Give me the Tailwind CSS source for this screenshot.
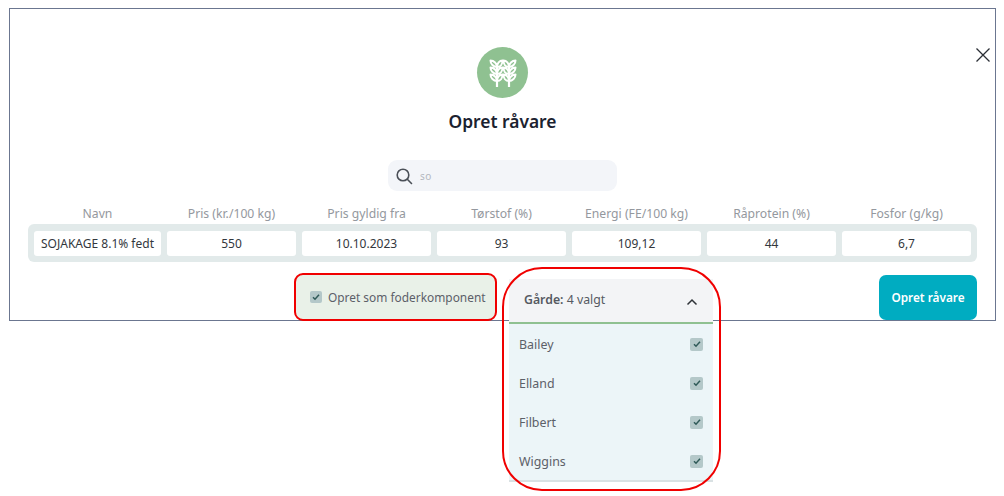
<!doctype html>
<html lang="da">
<head>
<meta charset="utf-8">
<script src="https://cdn.jsdelivr.net/npm/@tailwindcss/browser@4"></script>
</head>
<body class="bg-white font-['Noto_Sans',sans-serif]">
<div class="relative w-[1004px] h-[496px] overflow-hidden pt-[8px] pl-[9px]">
  <section class="relative w-[987px] h-[313px] border border-[#6b7690] bg-white flex flex-col items-center pt-[38px]">
    <button class="absolute right-[4px] top-[38px] text-[#2a2e35]" aria-label="Luk">
      <svg width="16" height="16" viewBox="0 0 16 16" fill="none" stroke="currentColor" stroke-width="1.3"><path d="M1.5 1.5 14.500 14.500M14.500 1.500 1.500 14.500"/></svg>
    </button>
    <div class="w-[51px] h-[51px] rounded-full bg-[#8fc191] flex items-center justify-center">
      <svg width="28" height="28" viewBox="0 0 28 28" fill="none" stroke="#fff" stroke-width="2" stroke-linecap="round" stroke-linejoin="round">
        <path stroke-width="2.200" d="M8 5v23M20 5v23"/>
        <path d="M8 8C4.500 8 1.500 5 1.500 1.500 5 1.500 8 4.500 8 8ZM8 8c3.500 0 5.500-3 5.500-6.500C10.500 1.500 8 4.500 8 8ZM8 15C4.500 15 1.500 12 1.500 8.500 5 8.500 8 11.500 8 15ZM8 15c3.500 0 5.500-3 5.500-6.500-3 0-5.500 3-5.500 6.500ZM8 22C4.500 22 1.500 19 1.500 15.500 5 15.500 8 18.500 8 22ZM8 22c3.500 0 5.500-3 5.500-6.500-3 0-5.500 3-5.500 6.500Z"/>
        <path d="M20 8c-3.500 0-5.500-3-5.500-6.500C17.500 1.500 20 4.500 20 8ZM20 8c3.500 0 6.500-3 6.500-6.500C23 1.500 20 4.500 20 8ZM20 15c-3.500 0-5.500-3-5.500-6.500 3 0 5.500 3 5.500 6.500ZM20 15c3.500 0 6.500-3 6.500-6.500-3.500 0-6.500 3-6.500 6.500ZM20 22c-3.500 0-5.500-3-5.500-6.500 3 0 5.500 3 5.500 6.500ZM20 22c3.500 0 6.500-3 6.500-6.500-3.500 0-6.500 3-6.500 6.500Z"/>
      </svg>
    </div>
    <h1 class="mt-[10px] text-[17.4px] leading-[26px] font-semibold text-[#1b2230]">Opret råvare</h1>
    <div class="mt-[26px] w-[229px] h-[31px] rounded-[9px] bg-[#f3f5f9] flex items-center pl-[7px] gap-[7px]">
      <svg width="18" height="18" viewBox="0 0 18 18" fill="none" stroke="#4a4f57" stroke-width="1.6" stroke-linecap="round"><circle cx="8" cy="8" r="5.800"/><path d="m12.300 12.300 4.200 4.200"/></svg>
      <span class="pt-[2px] text-[10px] text-[#b4b8bf] tracking-[0.5px]">so</span>
    </div>
    <div class="mt-[13px] w-[949px] grid grid-cols-[127px_repeat(6,1fr)] gap-x-[6px] px-[6px] text-center text-[12.2px] leading-[20px] text-[#94989e]">
      <span>Navn</span><span>Pris (kr./100 kg)</span><span>Pris gyldig fra</span><span>Tørstof (%)</span><span>Energi (FE/100 kg)</span><span>Råprotein (%)</span><span>Fosfor (g/kg)</span>
    </div>
    <div class="w-[949px] h-[38px] rounded-[6px] bg-[#e2eaea] grid grid-cols-[127px_repeat(6,1fr)] gap-x-[6px] px-[6px] pt-[7px] pb-[6px] text-center text-[12px] leading-[25px] text-[#33373d]">
      <span class="bg-white rounded-[3px] whitespace-nowrap">SOJAKAGE 8.1% fedt</span><span class="bg-white rounded-[3px]">550</span><span class="bg-white rounded-[3px]">10.10.2023</span><span class="bg-white rounded-[3px]">93</span><span class="bg-white rounded-[3px]">109,12</span><span class="bg-white rounded-[3px]">44</span><span class="bg-white rounded-[3px]">6,7</span>
    </div>
    <button class="absolute right-[18px] bottom-[0px] w-[98px] h-[45px] rounded-[7px] bg-[#00acc1] text-white text-[11.8px] font-semibold">Opret råvare</button>
  </section>

  <label class="absolute left-[294px] top-[273px] w-[203px] h-[48px] rounded-[9px] border-[2.5px] border-[#f00000] bg-[#e9f1e8] flex items-center pl-[13.500px] gap-[6.500px] text-[11.9px] text-[#5c6068]">
    <span class="w-[12px] h-[12px] rounded-[2px] bg-[#b4c8c9] flex items-center justify-center">
      <svg width="10" height="10" viewBox="0 0 10 10" fill="none" stroke="#2f5a58" stroke-width="1.500"><path d="m2 5.200 2 2 4-4.400"/></svg>
    </span>
    <span class="pt-[2px] whitespace-nowrap">Opret som foderkomponent</span>
  </label>

  <div class="absolute left-[509px] top-[279px] w-[204px]">
    <div class="h-[45px] bg-[#f3f4f6] flex items-center justify-between pl-[15px] pr-[15px] text-[12.300px] text-[#565a62] border-b-2 border-[#8fc191]">
      <span><b class="font-semibold">Gårde:</b> 4 valgt</span>
      <svg class="mt-[3px]" width="12" height="8" viewBox="0 0 12 8" fill="none" stroke="#2f3338" stroke-width="1.500"><path d="m1.500 6.500 4.500-4.500 4.500 4.500"/></svg>
    </div>
    <ul class="bg-[#ecf5f8] border-b-2 border-[#d9e1e3] text-[12.400px] text-[#5c6068]">
      <li class="h-[39px] pt-[3px] flex items-center justify-between pl-[10px] pr-[10px]">Bailey<span class="-mt-[2px] w-[13px] h-[13px] rounded-[2px] bg-[#b4c8c9] flex items-center justify-center"><svg width="10" height="10" viewBox="0 0 10 10" fill="none" stroke="#2f5a58" stroke-width="1.500"><path d="m2 5.200 2 2 4-4.400"/></svg></span></li>
      <li class="h-[39px] pt-[3px] flex items-center justify-between pl-[10px] pr-[10px]">Elland<span class="-mt-[2px] w-[13px] h-[13px] rounded-[2px] bg-[#b4c8c9] flex items-center justify-center"><svg width="10" height="10" viewBox="0 0 10 10" fill="none" stroke="#2f5a58" stroke-width="1.500"><path d="m2 5.200 2 2 4-4.400"/></svg></span></li>
      <li class="h-[39px] pt-[3px] flex items-center justify-between pl-[10px] pr-[10px]">Filbert<span class="-mt-[2px] w-[13px] h-[13px] rounded-[2px] bg-[#b4c8c9] flex items-center justify-center"><svg width="10" height="10" viewBox="0 0 10 10" fill="none" stroke="#2f5a58" stroke-width="1.500"><path d="m2 5.200 2 2 4-4.400"/></svg></span></li>
      <li class="h-[39px] pt-[3px] flex items-center justify-between pl-[10px] pr-[10px]">Wiggins<span class="-mt-[2px] w-[13px] h-[13px] rounded-[2px] bg-[#b4c8c9] flex items-center justify-center"><svg width="10" height="10" viewBox="0 0 10 10" fill="none" stroke="#2f5a58" stroke-width="1.500"><path d="m2 5.200 2 2 4-4.400"/></svg></span></li>
    </ul>
  </div>
  <div class="absolute left-[502px] top-[267px] w-[219px] h-[224px] rounded-[40px] border-[2px] border-[#f00000]"></div>
</div>
</body>
</html>
